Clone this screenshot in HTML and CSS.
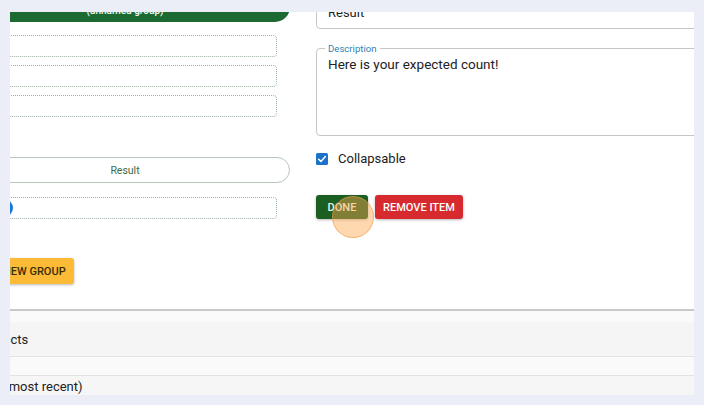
FILE: index.html
```html
<!DOCTYPE html>
<html lang="en">
<head>
<meta charset="utf-8">
<title>Group editor</title>
<link rel="stylesheet" href="styles.css">
</head>
<body>
<div class="viewport">
  <div class="canvas">
    <div class="panel">
      <div class="left-col">
        <div class="group-head">(unnamed group)</div>
        <div class="slots">
          <div class="slot"></div>
          <div class="slot"></div>
          <div class="slot"></div>
        </div>
        <div class="result-pill">Result</div>
        <div class="slot slot-item"><span class="dot"></span></div>
        <button class="btn btn-new">NEW GROUP</button>
      </div>
      <div class="right-col">
        <div class="field-name">Result</div>
        <fieldset class="field-desc">
          <legend>Description</legend>
          <div class="desc-text">Here is your expected count!</div>
        </fieldset>
        <label class="check-row">
          <svg class="checkbox" viewBox="0 0 12 12" width="12" height="12" aria-hidden="true">
            <rect x="0" y="0" width="12" height="12" rx="1.6" fill="#1a73c9"/>
            <path d="M2.6 6.2 L4.9 8.4 L9.4 3.6" fill="none" stroke="#fff" stroke-width="1.5" stroke-linecap="round" stroke-linejoin="round"/>
          </svg>
          <span>Collapsable</span>
        </label>
        <div class="actions">
          <button class="btn btn-done">DONE</button>
          <button class="btn btn-remove">REMOVE ITEM</button>
          <span class="click-mark"></span>
        </div>
      </div>
    </div>
    <div class="rows">
      <div class="row-gap"></div>
      <div class="row row-head">Products</div>
      <div class="row row-blank"></div>
      <div class="row row-last">Last (most recent)</div>
    </div>
  </div>
</div>
</body>
</html>
```

FILE: styles.css
```css
html, body {
  margin: 0;
  padding: 0;
}
body {
  width: 704px;
  height: 405px;
  overflow: hidden;
  background: #eceef7;
  font-family: Roboto, "Liberation Sans", Arial, sans-serif;
  color: #222;
}
.viewport {
  margin: 12px 0 0 10px;
  width: 684px;
  height: 383px;
  overflow: hidden;
  background: #ffffff;
}
.canvas {
  margin-left: -50px;
  margin-top: -20px;
  width: 820px;
}
.panel {
  display: flex;
  align-items: flex-start;
  column-gap: 26px;
  height: 317px;
  background: #ffffff;
  border-bottom: 2px solid #c9c9c9;
}
.left-col {
  flex: none;
  width: 330px;
  display: flex;
  flex-direction: column;
}
.group-head {
  box-sizing: border-box;
  height: 30px;
  padding-top: 6px;
  border-radius: 15px;
  background: #1c6a31;
  color: #f2f7f2;
  font-size: 10px;
  font-weight: 500;
  display: flex;
  align-items: center;
  justify-content: center;
}
.slots {
  margin-top: 13px;
  padding: 0 13px;
  display: flex;
  flex-direction: column;
  gap: 8px;
}
.slot {
  box-sizing: border-box;
  height: 22px;
  border: 1px dotted #98b09e;
  border-radius: 4px;
}
.result-pill {
  box-sizing: border-box;
  margin-top: 40px;
  height: 26px;
  border: 1.5px solid #b7c7ba;
  border-radius: 13px;
  display: flex;
  align-items: center;
  justify-content: center;
  color: #3c6c46;
  font-size: 10.5px;
}
.slot-item {
  margin: 14px 13px 0;
  display: flex;
  align-items: center;
}
.dot {
  width: 18px;
  height: 18px;
  margin-left: 21px;
  border-radius: 50%;
  background: #1976d2;
}
.btn {
  box-sizing: border-box;
  height: 24px;
  border: none;
  border-radius: 3px;
  font-family: Roboto, "Liberation Sans", Arial, sans-serif;
  font-size: 11px;
  font-weight: 500;
  letter-spacing: 0;
  box-shadow: 0 1px 3px rgba(0, 0, 0, 0.28);
  cursor: pointer;
}
.btn-new {
  align-self: flex-start;
  margin-top: 39px;
  margin-left: 35px;
  height: 26px;
  padding: 0 8px;
  background: #fbbb36;
  color: #3a2a06;
}
.right-col {
  flex: none;
  width: 440px;
  display: flex;
  flex-direction: column;
}
.field-name {
  box-sizing: border-box;
  height: 37px;
  padding: 12px 11px 0;
  border: 1px solid #c6c6c6;
  border-radius: 4px;
  font-size: 13px;
  line-height: 15px;
  color: #222;
}
.field-desc {
  margin: 14px 0 0;
  padding: 0 11px 0 8px;
  min-width: 0;
  border: 1px solid #c6c6c6;
  border-radius: 4px;
}
.field-desc legend {
  padding: 0 3px;
  font-size: 9.6px;
  line-height: 11px;
  color: #2f7fb5;
}
.desc-text {
  box-sizing: border-box;
  height: 81px;
  padding: 2px 0 0 3px;
  font-size: 13.5px;
  line-height: 16px;
  color: #222;
}
.check-row {
  margin-top: 16px;
  height: 13px;
  display: flex;
  align-items: center;
  gap: 10px;
  font-size: 13px;
  color: #222;
}
.checkbox {
  flex: none;
  display: block;
}
.actions {
  position: relative;
  margin-top: 30px;
  display: flex;
  gap: 7px;
  height: 24px;
}
.btn-done {
  width: 52px;
  padding: 0;
  background: #1a5e22;
  color: #f4f4ee;
}
.btn-remove {
  width: 88px;
  padding: 0;
  background: #d62a2f;
  color: #ffffff;
}
.click-mark {
  position: absolute;
  left: 16px;
  top: 1px;
  width: 42px;
  height: 42px;
  box-sizing: border-box;
  border-radius: 50%;
  background: rgba(255, 168, 78, 0.45);
  border: 1px solid rgba(236, 150, 70, 0.55);
}
.rows {
  display: flex;
  flex-direction: column;
}
.row-gap {
  height: 11px;
  background: #fafafa;
}
.row {
  display: flex;
  align-items: center;
  padding-left: 16px;
  font-size: 13px;
  color: #222;
}
.row-head {
  height: 34px;
  background: #f5f5f5;
  border-bottom: 1px solid #e2e2e2;
}
.row-blank {
  height: 18px;
  background: #fafafa;
  border-bottom: 1px solid #e2e2e2;
}
.row-last {
  height: 21px;
  background: #f6f6f6;
}
```
